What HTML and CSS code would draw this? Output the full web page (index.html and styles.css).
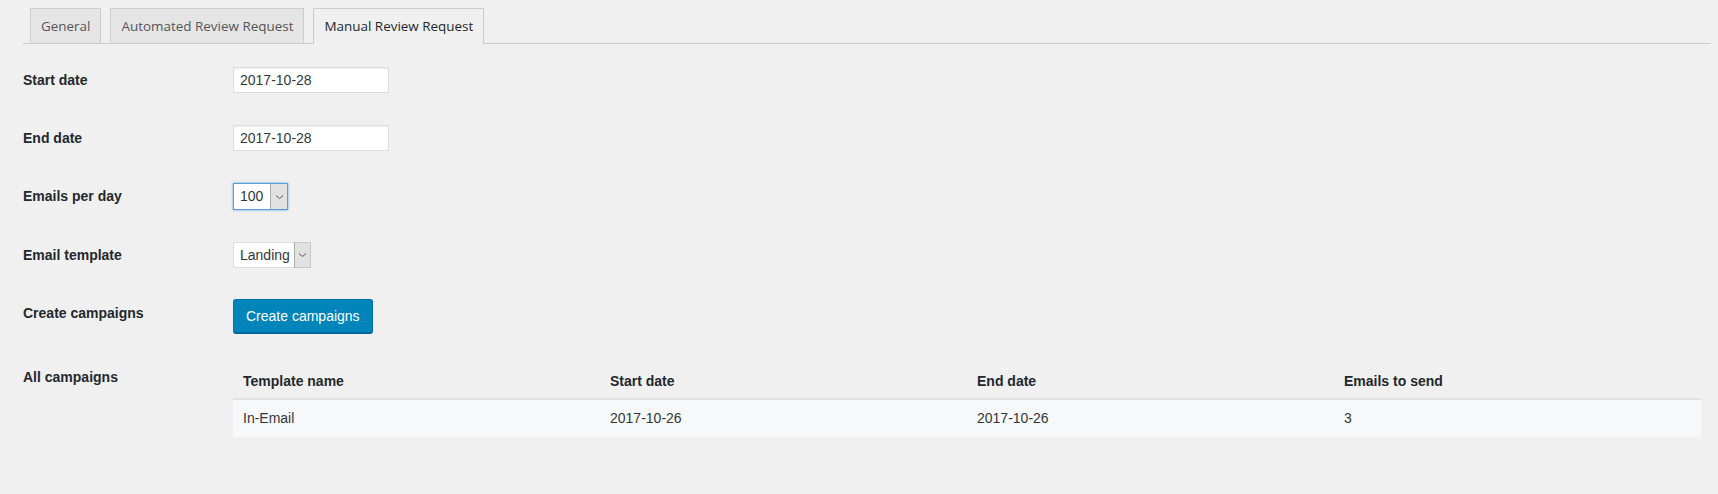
FILE: index.html
```html
<!DOCTYPE html>
<html>
<head>
<meta charset="utf-8">
<link rel="stylesheet" href="styles.css">
</head>
<body>
<div class="wrap">
  <nav class="tabs">
    <span class="tab">General</span>
    <span class="tab">Automated Review Request</span>
    <span class="tab active">Manual Review Request</span>
  </nav>
  <div class="form">
    <div class="row">
      <div class="label">Start date</div>
      <div class="field"><span class="input">2017-10-28</span></div>
    </div>
    <div class="row">
      <div class="label">End date</div>
      <div class="field"><span class="input">2017-10-28</span></div>
    </div>
    <div class="row">
      <div class="label">Emails per day</div>
      <div class="field"><span class="select focus"><span class="sel-text">100</span><span class="sel-btn"><svg width="9" height="6" viewBox="0 0 9 6"><path d="M1 1.5 L4.5 4.5 L8 1.5" fill="none" stroke="#555" stroke-width="1"/></svg></span></span></div>
    </div>
    <div class="row row-tpl">
      <div class="label">Email template</div>
      <div class="field"><span class="select"><span class="sel-text">Landing</span><span class="sel-btn"><svg width="9" height="6" viewBox="0 0 9 6"><path d="M1 1.5 L4.5 4.5 L8 1.5" fill="none" stroke="#555" stroke-width="1"/></svg></span></span></div>
    </div>
    <div class="row">
      <div class="label">Create campaigns</div>
      <div class="field"><span class="button">Create campaigns</span></div>
    </div>
    <div class="row">
      <div class="label">All campaigns</div>
      <div class="field">
        <table class="campaigns">
          <thead>
            <tr><th>Template name</th><th>Start date</th><th>End date</th><th>Emails to send</th></tr>
          </thead>
          <tbody>
            <tr><td>In-Email</td><td>2017-10-26</td><td>2017-10-26</td><td>3</td></tr>
          </tbody>
        </table>
      </div>
    </div>
  </div>
</div>
</body>
</html>
```
FILE: styles.css
```css
html, body {
  margin: 0;
  padding: 0;
  background: #f0f0f1;
}
body {
  font-family: "Liberation Sans", Arial, sans-serif;
  font-size: 14px;
  color: #23282d;
}
.wrap {
  margin: 0 7px 0 23px;
  padding-top: 8px;
}
.tabs {
  display: flex;
  align-items: flex-end;
  gap: 9px;
  padding-left: 7px;
  border-bottom: 1px solid #ccc;
  height: 35px;
}
.tab {
  display: block;
  box-sizing: border-box;
  height: 35px;
  padding: 5px 10px;
  font-family: "Open Sans", "Noto Sans", sans-serif;
  font-size: 13.45px;
  line-height: 24px;
  font-weight: 400;
  color: #555;
  background: #e5e5e5;
  border: 1px solid #ccc;
  border-bottom: none;
  white-space: nowrap;
}
.tab.active {
  height: 36px;
  margin-bottom: -1px;
  background: #f0f0f1;
  color: #23282d;
}
.form {
  margin-top: 7px;
}
.row {
  display: grid;
  grid-template-columns: 210px 1fr;
}
.label {
  padding: 20px 10px 20px 0;
  font-weight: bold;
  line-height: 18px;
  color: #23282d;
}
.field {
  padding: 15px 0;
  display: flex;
  align-items: flex-start;
}
.input {
  box-sizing: border-box;
  display: block;
  width: 156px;
  height: 26px;
  margin: 1px 0;
  padding: 0 6px;
  line-height: 24px;
  background: #fff;
  border: 1px solid #ddd;
  box-shadow: inset 0 1px 2px rgba(0,0,0,.07);
  color: #32373c;
}
.select {
  box-sizing: border-box;
  display: flex;
  height: 26px;
  margin: 1px 0;
  background: #fff;
  border: 1px solid #ddd;
  color: #32373c;
}
.select.focus {
  height: 27px;
  border-color: #5b9dd9;
  box-shadow: 0 0 2px rgba(30,140,190,.8);
}
.sel-text {
  padding: 0 4px 0 6px;
  line-height: 24px;
}
.select.focus .sel-text {
  width: 26px;
}
.sel-btn {
  box-sizing: border-box;
  width: 17px;
  display: flex;
  align-items: center;
  justify-content: center;
  background: #e1e1e1;
  border-left: 1px solid #adadad;
  border-right: 1px solid #c8c8c8;
  margin: -1px -1px -1px 0;
  border-top: 1px solid #c8c8c8;
  border-bottom: 1px solid #c8c8c8;
}
.select.focus .sel-btn {
  margin: 0;
  border-top: none;
  border-bottom: none;
  border-right: none;
}
.button {
  box-sizing: border-box;
  display: block;
  height: 34px;
  padding: 0 12px;
  line-height: 32px;
  color: #fff;
  background: #0085ba;
  border: 1px solid #0073aa;
  border-bottom-color: #006799;
  border-radius: 3px;
  box-shadow: 0 1px 0 #006799;
  white-space: nowrap;
}
.campaigns {
  width: 1468px;
  table-layout: fixed;
  border-collapse: collapse;
  border-spacing: 0;
}
.campaigns th {
  text-align: left;
  font-weight: bold;
  padding: 8px 10px 7px;
  line-height: 20px;
  color: #23282d;
  border-bottom: 2px solid #dfe0e2;
}
.campaigns td {
  padding: 8px 10px;
  line-height: 21px;
  color: #32373c;
  background: #f7f8f9;
}
```
